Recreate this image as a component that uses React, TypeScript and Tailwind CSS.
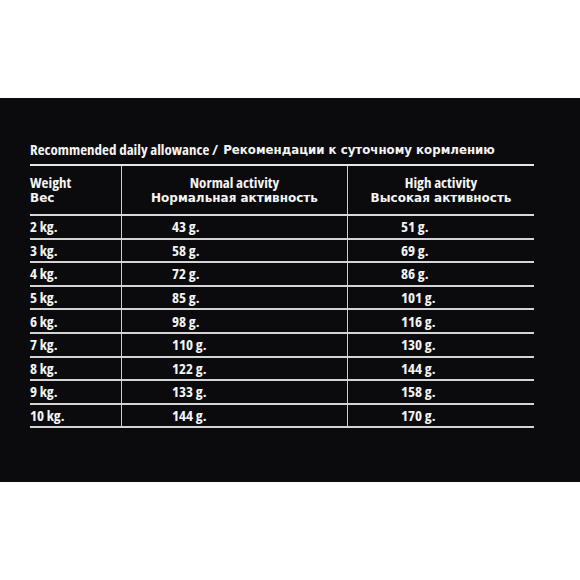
const rows = [
  ['2 kg.', '43 g.', '51 g.'],
  ['3 kg.', '58 g.', '69 g.'],
  ['4 kg.', '72 g.', '86 g.'],
  ['5 kg.', '85 g.', '101 g.'],
  ['6 kg.', '98 g.', '116 g.'],
  ['7 kg.', '110 g.', '130 g.'],
  ['8 kg.', '122 g.', '144 g.'],
  ['9 kg.', '133 g.', '158 g.'],
  ['10 kg.', '144 g.', '170 g.'],
];

// condensed latin face + wide cyrillic face, as on the pack
const narrow = "font-['Open_Sans',sans-serif] [font-stretch:75%] font-bold";
const wide = "font-['DejaVu_Sans','Open_Sans',sans-serif] font-bold";

export default function App() {
  return (
    <div className="w-[580px] h-[580px] bg-white pt-[98px]">
      <div className="h-[384px] bg-[#0b0b0d] pl-[30px] pt-[40px] text-[#f4f4f4]">
        <div className="w-[504px]">
          <h1 className="h-[26px] flex items-end pb-[7px] whitespace-nowrap leading-none">
            <span className={`${narrow} text-[15px]`}>Recommended daily allowance /</span>
            <span className={`${wide} text-[11.8px] ml-[5px]`}>Рекомендации к суточному кормлению</span>
          </h1>

          <div className="border-t-2 border-[#e6e6e6]">
            {/* Header */}
            <div className="flex h-[50px] border-b-2 border-[#d8d8d8]">
              <div className="w-[92px] border-r border-[#cfcfcf] flex flex-col justify-center gap-[1px]">
                <span className={`${narrow} text-[15px] leading-[15px]`}>Weight</span>
                <span className={`${wide} text-[12px] leading-[15px]`}>Вес</span>
              </div>
              <div className="w-[226px] border-r border-[#cfcfcf] flex flex-col items-center justify-center gap-[1px]">
                <span className={`${narrow} text-[15px] leading-[15px]`}>Normal activity</span>
                <span className={`${wide} text-[12px] leading-[15px]`}>Нормальная активность</span>
              </div>
              <div className="flex-1 flex flex-col items-center justify-center gap-[1px]">
                <span className={`${narrow} text-[15px] leading-[15px]`}>High activity</span>
                <span className={`${wide} text-[12px] leading-[15px]`}>Высокая активность</span>
              </div>
            </div>

            {/* Rows */}
            {rows.map(([w, n, h]) => (
              <div key={w} className={`${narrow} flex h-[23.6px] border-b-2 border-[#d4d4d4] text-[15px] leading-none`}>
                <div className="w-[92px] border-r border-[#cfcfcf] flex items-center">{w}</div>
                <div className="w-[226px] border-r border-[#cfcfcf] flex items-center pl-[50px]">{n}</div>
                <div className="flex-1 flex items-center pl-[53px]">{h}</div>
              </div>
            ))}
          </div>
        </div>
      </div>
    </div>
  );
}
